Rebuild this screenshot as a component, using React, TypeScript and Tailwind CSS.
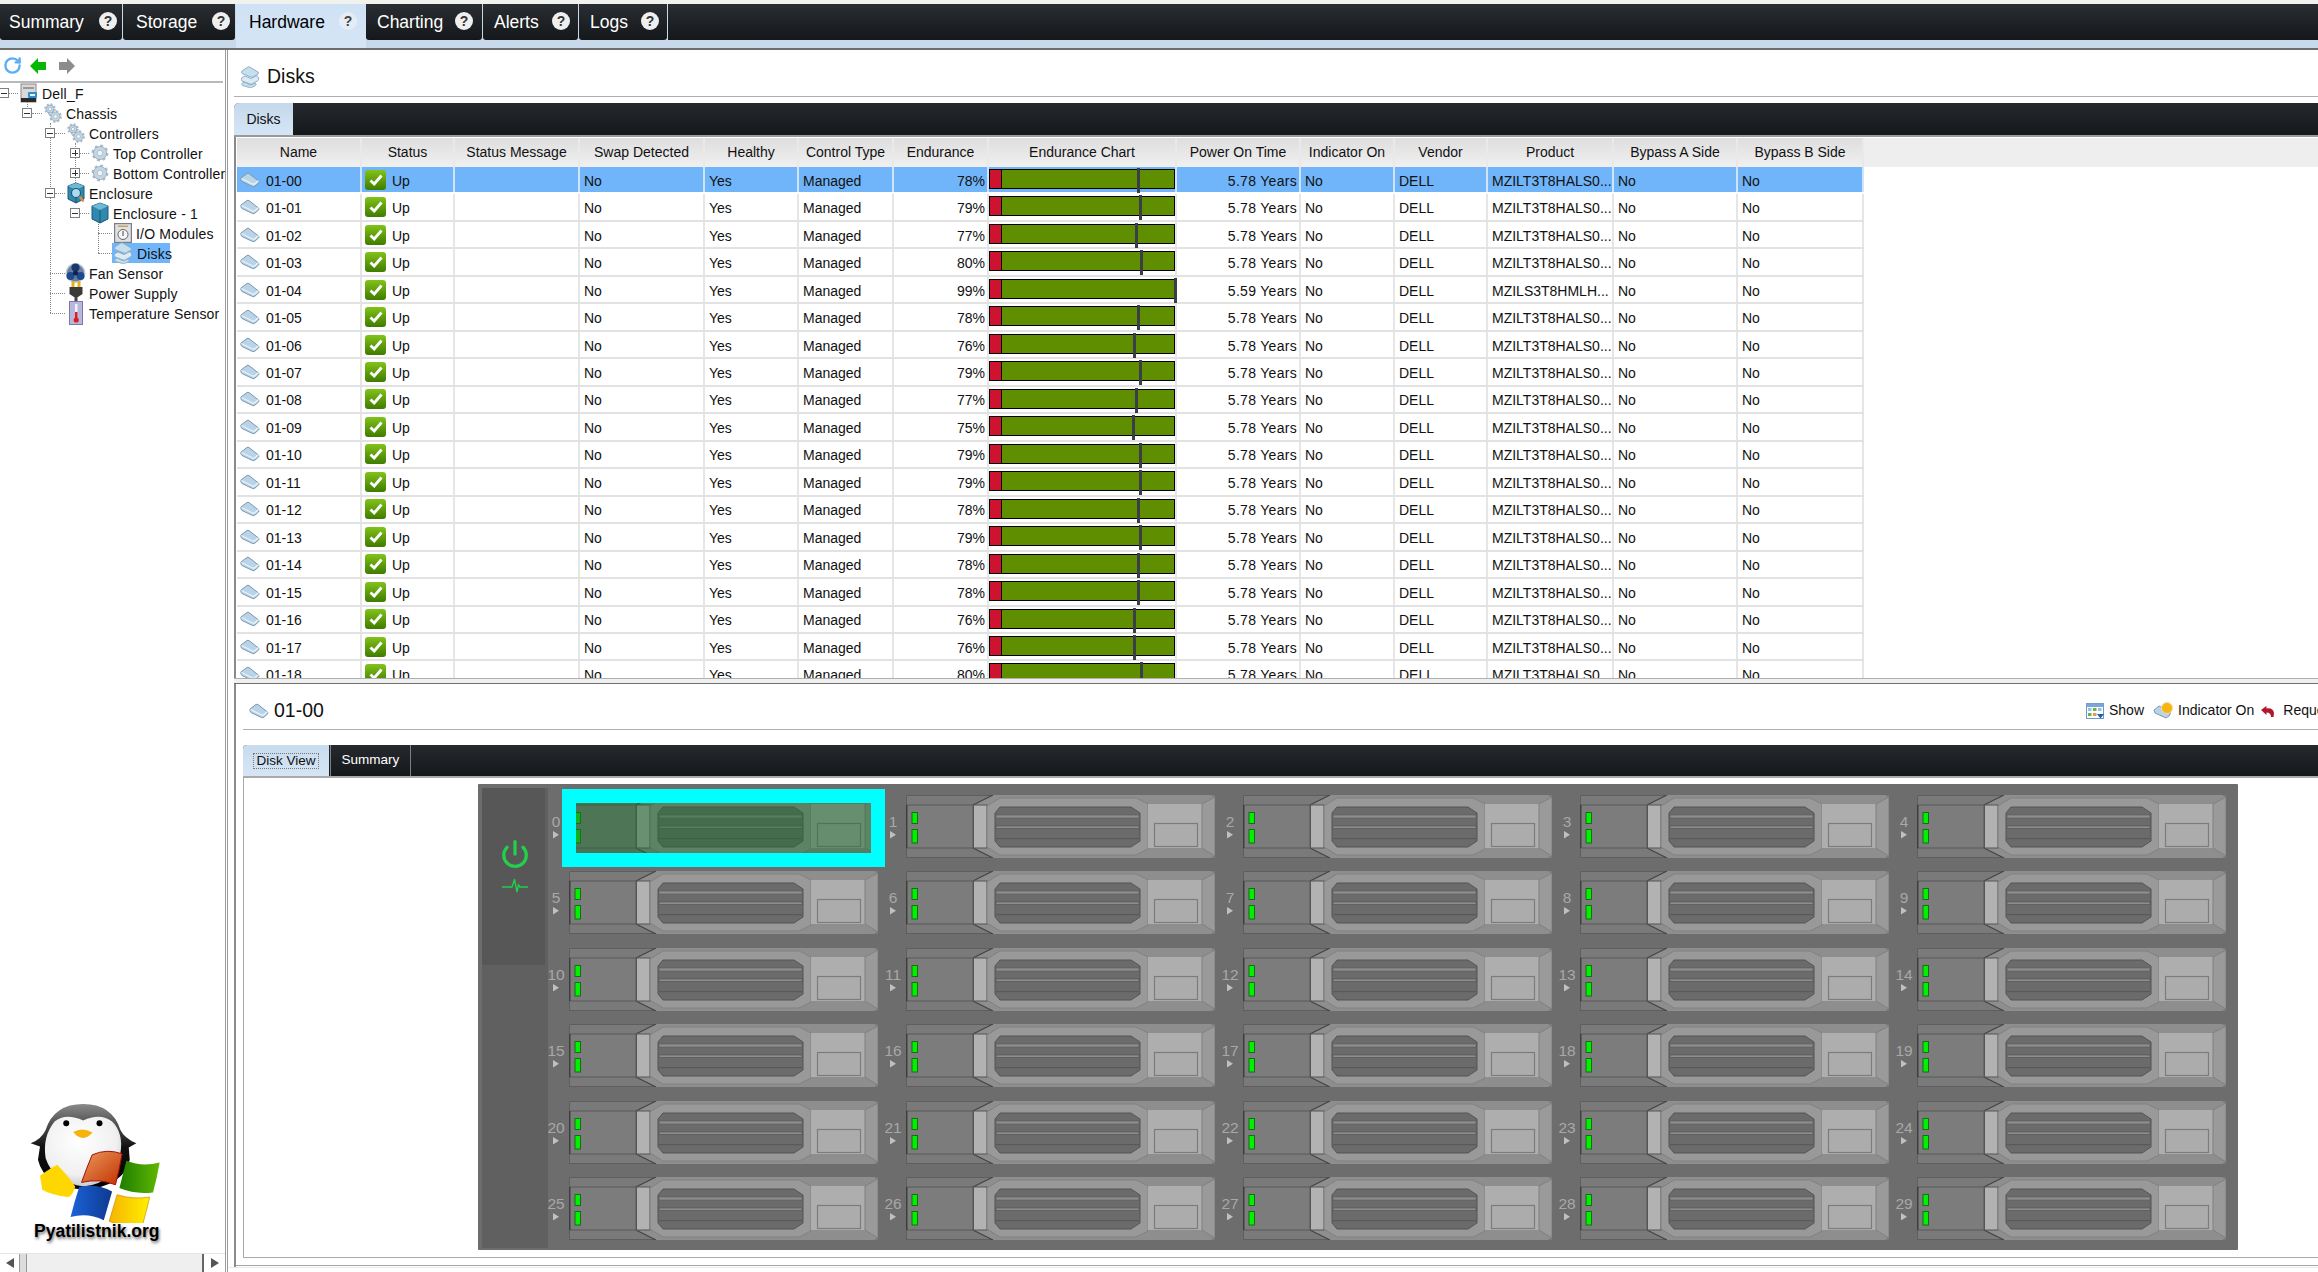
import React from "react";
import { RotateCw, Power } from "lucide-react";

const navTabs = [
  { label: "Summary", cls: "w-[122px] pl-[9px] pr-[5px]" },
  { label: "Storage", cls: "w-[112px] pl-[13px] pr-[5px]" },
  { label: "Hardware", cls: "w-[130px] pl-[13px] pr-[9px]", active: true },
  { label: "Charting", cls: "w-[116px] pl-[11px] pr-[9px]" },
  { label: "Alerts", cls: "w-[95px] pl-[11px] pr-[8px]" },
  { label: "Logs", cls: "w-[88px] pl-[11px] pr-[8px]" },
];

const percents = [78, 79, 77, 80, 99, 78, 76, 79, 77, 75, 79, 79, 78, 79, 78, 78, 76, 76, 80];
const headers = ["Name", "Status", "Status Message", "Swap Detected", "Healthy", "Control Type", "Endurance", "Endurance Chart", "Power On Time", "Indicator On", "Vendor", "Product", "Bypass A Side", "Bypass B Side"];
const cols = "grid grid-cols-[125px_93px_125px_125px_94px_95px_95px_188px_124px_94px_93px_126px_124px_126px]";

function DiskIcon({ size = 20, className = "" }: { size?: number; className?: string }) {
  return (
    <svg width={size} height={size * 0.8} viewBox="0 0 20 16" className={className}>
      <path d="M1 6 L7 1.5 Q8 1 9 1.6 L18.5 9 Q19.5 10 18.5 11 L15 14 Q14 15 12.5 14.5 L2 9.5 Q0.3 8 1 6Z" fill="#b9d4e8" stroke="#7f97aa" strokeWidth="1" />
      <path d="M1.5 6.5 L12.5 12 Q14 12.5 15 11.5 L18.5 8.8" fill="none" stroke="#e8f3fa" strokeWidth="1.3" />
    </svg>
  );
}

function DisksIcon() {
  return (
    <svg width="20" height="22" viewBox="0 0 20 22">
      <path d="M2 5 L8 1 Q9 0.6 10 1.2 L18 6 Q19 7 18 8 L13 11 Q12 11.6 11 11 L2 7.5 Q1 6 2 5Z" fill="#c6dfef" stroke="#8fb0c6" />
      <path d="M1.5 12 L5 10 L11 12.5 L17 9.5 L18.5 12 Q19 13.5 18 14.5 L12 18 Q11 18.6 10 18 L2 15 Q1 13.5 1.5 12Z" fill="#dceaf4" stroke="#8fb0c6" />
      <path d="M2 17.5 L4 16 L10.5 19 L15 17 L16 18 Q16.5 19 15.5 19.5 L11.5 21.5 Q10.5 22 9.5 21.5 L2.5 19.5 Q1.5 18.5 2 17.5Z" fill="#c6dfef" stroke="#8fb0c6" />
    </svg>
  );
}

function Gear({ cx, cy, r }: { cx: number; cy: number; r: number }) {
  const teeth = 2 * Math.PI * (r + 0.6);
  const dash = teeth / 16;
  return (
    <g>
      <circle cx={cx} cy={cy} r={r + 0.6} fill="none" stroke="#a9bccb" strokeWidth="2.4" strokeDasharray={`${dash} ${dash}`} />
      <circle cx={cx} cy={cy} r={r} fill="#c4d5e2" stroke="#93a8b8" strokeWidth="0.8" />
      <circle cx={cx} cy={cy} r={r * 0.42} fill="#f0f5f9" stroke="#9fb3c2" strokeWidth="0.7" />
    </g>
  );
}

function Gears() {
  return (
    <svg width="18" height="20" viewBox="0 0 18 20">
      <Gear cx={6} cy={6} r={4} />
      <Gear cx={11.5} cy={13.5} r={4.6} />
    </svg>
  );
}

function SingleGear() {
  return (
    <svg width="18" height="20" viewBox="0 0 18 20">
      <Gear cx={9} cy={10} r={6.6} />
    </svg>
  );
}

function ServerIcon() {
  return (
    <svg width="18" height="20" viewBox="0 0 18 20">
      <rect x="1" y="1" width="15" height="18" fill="#d9d9d9" stroke="#8a8a8a" />
      <rect x="3" y="4" width="11" height="2" fill="#9a9a9a" />
      <rect x="1" y="15" width="15" height="4" fill="#2a2a2a" />
      <rect x="8" y="9" width="9" height="6" rx="1" fill="#2d8ed0" />
      <rect x="10" y="11" width="5" height="2" fill="#e4f3ff" />
    </svg>
  );
}

function CubeIcon({ glass = false }: { glass?: boolean }) {
  return (
    <svg width="18" height="22" viewBox="0 0 18 22">
      <path d="M9 1 L17 4 V17 L9 21 L1 17 V4Z" fill="#2f88ad" stroke="#1d5b78" />
      <path d="M9 1 L17 4 L9 8 L1 4Z" fill="#6fb9d6" />
      <path d="M9 8 V21" stroke="#1b5570" />
      {glass && <circle cx="9" cy="11" r="4.5" fill="#a9dcf0" stroke="#23566e" strokeWidth="1.2" />}
      {glass && <path d="M12.5 14.5 L16.5 19.5" stroke="#e98a3a" strokeWidth="2.2" />}
    </svg>
  );
}

function IoIcon() {
  return (
    <svg width="18" height="20" viewBox="0 0 18 20">
      <rect x="0.5" y="0.5" width="17" height="19" fill="#dfe1e4" stroke="#7a7f86" strokeWidth="1.4" />
      <rect x="4" y="2.5" width="10" height="1.5" fill="#c5a35a" />
      <circle cx="9" cy="11.5" r="5" fill="#f6f6f6" stroke="#666" />
      <path d="M9 8 V13" stroke="#444" />
    </svg>
  );
}

function FanIcon() {
  return (
    <svg width="21" height="24" viewBox="0 0 21 24">
      <circle cx="10.5" cy="12" r="10" fill="#c3cad6" />
      <circle cx="10.5" cy="12" r="8.5" fill="#6b7ea0" />
      <circle cx="10.5" cy="6.5" r="4" fill="#17396f" />
      <circle cx="5.5" cy="15" r="4" fill="#1a4a8f" />
      <circle cx="15.5" cy="15" r="4" fill="#1a4a8f" />
      <circle cx="10.5" cy="12" r="2.5" fill="#0e2347" />
    </svg>
  );
}

function PlugIcon() {
  return (
    <svg width="14" height="24" viewBox="0 0 14 24">
      <rect x="2.5" y="0" width="3" height="6" fill="#e4b020" />
      <rect x="8.5" y="0" width="3" height="6" fill="#e4b020" />
      <path d="M0.5 6 H13.5 V13 L9 16 H5 L0.5 13Z" fill="#3a3a3a" />
      <rect x="5.5" y="16" width="3" height="8" fill="#444" />
    </svg>
  );
}

function ThermoIcon() {
  return (
    <svg width="14" height="24" viewBox="0 0 14 24">
      <rect x="0.5" y="0.5" width="13" height="23" fill="#b9b7de" stroke="#7a78a8" />
      <rect x="6" y="3" width="2.5" height="14" fill="#f2f2f6" />
      <rect x="6" y="11" width="2.5" height="7" fill="#d42020" />
      <circle cx="7.2" cy="19" r="2.6" fill="#d42020" />
    </svg>
  );
}

function Tri({ dir, size = 8, fill = "#555" }: { dir: "l" | "r"; size?: number; fill?: string }) {
  return (
    <svg width={size} height={size * 1.25} viewBox="0 0 8 10">
      <path d={dir === "r" ? "M0 0 L8 5 L0 10Z" : "M8 0 L0 5 L8 10Z"} fill={fill} />
    </svg>
  );
}

const box = (s: string) => (
  <span className="relative flex h-[10px] w-[10px] shrink-0 items-center justify-center border border-[#808080] bg-white">
    <span className="h-px w-[6px] bg-[#333]" />
    {s === "+" && <span className="absolute h-[6px] w-px bg-[#333]" />}
  </span>
);

const stub = "h-px shrink-0 border-t border-dotted border-[#888]";

const tree = [
  { label: "Dell_F", pl: "-ml-px", exp: "-", stubW: "w-[9px]", icon: <ServerIcon /> },
  { label: "Chassis", pl: "pl-[22px]", exp: "-", stubW: "w-[10px]", icon: <Gears /> },
  { label: "Controllers", pl: "pl-[45px]", exp: "-", stubW: "w-[10px]", icon: <Gears /> },
  { label: "Top Controller", pl: "pl-[70px]", exp: "+", stubW: "w-[9px]", icon: <SingleGear /> },
  { label: "Bottom Controller", pl: "pl-[70px]", exp: "+", stubW: "w-[9px]", icon: <SingleGear /> },
  { label: "Enclosure", pl: "pl-[45px]", exp: "-", stubW: "w-[10px]", icon: <CubeIcon glass /> },
  { label: "Enclosure - 1", pl: "pl-[70px]", exp: "-", stubW: "w-[9px]", icon: <CubeIcon /> },
  { label: "I/O Modules", pl: "pl-[98px]", stubW: "w-[14px]", icon: <IoIcon /> },
  { label: "Disks", pl: "pl-[98px]", stubW: "w-[14px]", icon: <DisksIcon />, selected: true },
  { label: "Fan Sensor", pl: "pl-[50px]", stubW: "w-[15px]", icon: <FanIcon /> },
  { label: "Power Supply", pl: "pl-[50px]", stubW: "w-[15px]", icon: <PlugIcon /> },
  { label: "Temperature Sensor", pl: "pl-[50px]", stubW: "w-[15px]", icon: <ThermoIcon /> },
];

function Logo() {
  return (
    <svg width="137" height="123" viewBox="80 60 410 370" className="ml-[27px]">
      <defs>
        <radialGradient id="belly" cx="0.45" cy="0.35" r="0.75">
          <stop offset="0" stopColor="#ffffff" />
          <stop offset="0.65" stopColor="#f0f0f0" />
          <stop offset="1" stopColor="#b5b5b5" />
        </radialGradient>
        <linearGradient id="cap" x1="0" y1="0" x2="0" y2="1">
          <stop offset="0" stopColor="#8a8a8a" />
          <stop offset="0.5" stopColor="#111" />
          <stop offset="1" stopColor="#000" />
        </linearGradient>
        <linearGradient id="win-r" x1="0" y1="0" x2="1" y2="1">
          <stop offset="0" stopColor="#eb9a5c" />
          <stop offset="1" stopColor="#c23000" />
        </linearGradient>
        <linearGradient id="win-g" x1="0" y1="0" x2="1" y2="0">
          <stop offset="0" stopColor="#1f7d00" />
          <stop offset="1" stopColor="#60b800" />
        </linearGradient>
        <linearGradient id="win-b" x1="0" y1="0" x2="1" y2="0">
          <stop offset="0" stopColor="#1c62d8" />
          <stop offset="1" stopColor="#0c3a90" />
        </linearGradient>
        <linearGradient id="win-y" x1="0" y1="0" x2="1" y2="0">
          <stop offset="0" stopColor="#f6b400" />
          <stop offset="1" stopColor="#fff000" />
        </linearGradient>
      </defs>
      <path d="M135 150 Q160 72 248 72 Q335 72 360 150 Q372 175 408 190 L385 203 L388 240 Q370 320 250 330 Q130 320 112 240 L118 200 L90 190 Q122 178 135 150Z" fill="url(#cap)" />
      <path d="M248 122 Q195 98 162 125 Q125 170 135 235 Q160 310 250 320 Q345 310 360 220 Q370 160 335 125 Q300 98 248 122Z" fill="url(#belly)" />
      <circle cx="197" cy="130" r="9" fill="#000" />
      <circle cx="297" cy="130" r="9" fill="#000" />
      <path d="M218 156 Q246 140 276 158 Q262 174 248 174 Q232 174 218 156Z" fill="#f6b40a" />
      <path d="M118 288 Q150 265 170 255 Q200 285 224 320 Q215 352 200 352 Q150 345 125 330Z" fill="#ffd700" />
      <path d="M275 225 Q320 205 365 222 Q358 265 345 315 Q295 295 243 308 Q258 265 275 225Z" fill="url(#win-r)" stroke="#a01010" strokeWidth="3" />
      <path d="M378 243 Q425 262 478 248 Q470 295 458 338 Q405 345 357 325 Q367 285 378 243Z" fill="url(#win-g)" />
      <path d="M236 322 Q290 310 335 335 Q322 380 310 422 Q262 398 210 412 Q222 365 236 322Z" fill="url(#win-b)" />
      <path d="M350 345 Q400 360 448 352 Q438 395 426 438 Q378 445 326 425 Q338 385 350 345Z" fill="url(#win-y)" stroke="#c88a00" strokeWidth="2" />
    </svg>
  );
}

function Disk() {
  return (
    <svg width="309" height="63" viewBox="0 0 309 63" className="block">
      <rect x="0" y="0" width="309" height="63" fill="#7a7a7a" />
      <path d="M0.5 63 V0.5 H87" fill="none" stroke="#5e5e5e" />
      <path d="M0.5 62.5 H87" stroke="#5e5e5e" />
      <rect x="0" y="10" width="67" height="43" fill="#7c7c7c" stroke="#585858" />
      <rect x="0" y="10" width="1.5" height="43" fill="#3e3e3e" />
      <path d="M67 10 L87 0 H305 L309 3 V60 L305 63 H87 L67 53Z" fill="#8e8e8e" />
      <path d="M67 10 L87 0" stroke="#444" strokeWidth="1.2" />
      <path d="M67 53 L87 63" stroke="#444" strokeWidth="1.2" />
      <rect x="67.5" y="10" width="13.5" height="43" fill="#b2b2b2" stroke="#555" />
      <path d="M81 11 L94 3 H230 L242 9 V54 L230 60 H94 L81 52Z" fill="#999" stroke="#818181" />
      <path d="M94 12 H225 L234 18 V46 L225 52 H94 L89 46 V18Z" fill="#6b6b6b" stroke="#555" />
      <rect x="90" y="20" width="143" height="3" fill="#8d8d8d" stroke="#5a5a5a" strokeWidth="0.6" />
      <rect x="90" y="31" width="143" height="2.5" fill="#8d8d8d" stroke="#505050" strokeWidth="0.6" />
      <rect x="90" y="43" width="143" height="1.2" fill="#595959" />
      <rect x="242" y="9" width="54" height="44" fill="#aeaeae" />
      <rect x="248.5" y="28.5" width="43" height="23" fill="#acacac" stroke="#7c7c7c" strokeWidth="1.2" />
      <path d="M296 9 L309 2 V61 L296 53Z" fill="#9a9a9a" stroke="#808080" />
      <rect x="6" y="17.5" width="5.5" height="11" fill="#00f000" stroke="#176c17" />
      <rect x="6" y="34.5" width="5.5" height="13.5" fill="#00f000" stroke="#176c17" />
    </svg>
  );
}

function Slot({ n }: { n: number }) {
  return (
    <div className="relative h-[63px] w-[309px]">
      <Disk />
      <div className="absolute right-full top-[19px] flex w-[26px] flex-col items-center text-[15.5px] leading-[16px] text-[#a8a8a8]">
        <span>{n}</span>
        <span className="mt-[1px]">
          <Tri dir="r" size={6} fill="#c0c0c0" />
        </span>
      </div>
      {n === 0 && (
        <div className="absolute left-[-7px] top-[-6px] h-[78px] w-[323px] border-x-[14px] border-y-[14px] border-[#00ffff] bg-[#207030]/50" />
      )}
    </div>
  );
}

export default function App() {
  return (
    <div className="flex h-[1272px] w-[2318px] flex-col overflow-hidden bg-white font-[Liberation_Sans,Arial,sans-serif] text-[14px] text-[#111]">
      <div className="h-[4px] shrink-0 bg-[#f1f1ee]" />
      <nav className="flex h-[44px] shrink-0 items-start bg-[#c8d9ea]">
        {navTabs.map((t) => (
          <div
            key={t.label}
            className={
              t.active
                ? `flex h-[44px] items-start justify-between bg-gradient-to-b from-[#cfe2f5] to-[#d5e5f5] pt-[7px] text-[17.5px] text-black ${t.cls}`
                : `mr-px flex h-[36px] items-start justify-between rounded-b-[3px] bg-gradient-to-b from-[#2a2d31] to-[#15181b] pt-[7px] text-[17.5px] text-white ${t.cls}`
            }
          >
            <span className="leading-[22px]">{t.label}</span>
            <span
              className={
                t.active
                  ? "mt-[1px] flex h-[18px] w-[18px] items-center justify-center rounded-full bg-[#e4edf5] text-[14px] font-bold text-[#444]"
                  : "mt-[1px] flex h-[18px] w-[18px] items-center justify-center rounded-full bg-[#efefef] text-[14px] font-bold text-[#333]"
              }
            >
              ?
            </span>
          </div>
        ))}
        <div className="h-[36px] flex-1 bg-gradient-to-b from-[#2a2d31] to-[#15181b]" />
      </nav>
      <div className="h-[2px] shrink-0 bg-[#6d6d6d]" />

      <div className="flex min-h-0 flex-1">
        {/* Sidebar */}
        <aside className="flex w-[225px] shrink-0 flex-col">
          <div className="mr-[2px] flex h-[33px] shrink-0 items-center border-b-2 border-[#b9b9b9] pl-[3px]">
            <RotateCw size={19} strokeWidth={3} className="text-[#5aaef5]" />
            <svg width="17" height="16" viewBox="0 0 17 16" className="ml-[8px]">
              <path d="M0 8 L8 0 V4 H16 V12 H8 V16Z" fill="#06b806" />
            </svg>
            <svg width="16" height="16" viewBox="0 0 16 16" className="ml-[12px]">
              <path d="M16 8 L8 0 V4 H0 V12 H8 V16Z" fill="#8c8c8c" />
            </svg>
          </div>
          <div className="relative flex-1 overflow-hidden">
            <div className="absolute left-[27px] top-[14px] h-[20px] border-l border-dotted border-[#888]" />
            <div className="absolute left-[50px] top-[40px] h-[190px] border-l border-dotted border-[#888]" />
            <div className="absolute left-[75px] top-[60px] h-[40px] border-l border-dotted border-[#888]" />
            <div className="absolute left-[98px] top-[130px] h-[40px] border-l border-dotted border-[#888]" />
            <div className="relative">
              {tree.map((r) => (
                <div key={r.label} className={`flex h-[20px] items-center ${r.pl}`}>
                  {r.exp && box(r.exp)}
                  <span className={`${stub} ${r.stubW}`} />
                  <span className={r.selected ? "flex h-[20px] w-[58px] items-center bg-[#70b5f9]" : "flex h-[20px] items-center"}>
                    <span className="flex h-[20px] w-[21px] shrink-0 items-center justify-center">{r.icon}</span>
                    <span className={r.selected ? "ml-[4px] mt-[2px] whitespace-nowrap tracking-[0.2px]" : "ml-[3px] mt-[2px] whitespace-nowrap tracking-[0.2px]"}>{r.label}</span>
                  </span>
                </div>
              ))}
            </div>
          </div>
          <div className="relative shrink-0">
            <Logo />
            <div className="mt-[-2px] pl-[34px] text-[17.5px] font-bold leading-[20px] text-black [text-shadow:1px_2px_3px_rgba(0,0,0,0.55)]">
              Pyatilistnik.org
            </div>
          </div>
          <div className="mt-[12px] flex h-[19px] shrink-0 items-center border-t border-[#e4e4e4] text-[#444]">
            <span className="flex w-[19px] justify-center">
              <Tri dir="l" />
            </span>
            <span className="h-full w-[8px] border-x border-[#999] bg-[#dcdcdc]" />
            <span className="h-full flex-1 bg-[#efefef]" />
            <span className="h-full w-[2px] bg-[#666]" />
            <span className="flex w-[21px] justify-center">
              <Tri dir="r" />
            </span>
          </div>
        </aside>
        <div className="w-[3px] shrink-0 border-x border-[#9a9a9a] bg-white" />

        {/* Main */}
        <main className="flex min-w-0 flex-1 flex-col">
          {/* Upper pane */}
          <section className="flex h-[628px] shrink-0 flex-col pl-[6px]">
            <div className="flex h-[47px] shrink-0 items-center border-b border-[#b0b0b0] pl-[6px] pt-[8px]">
              <DisksIcon />
              <span className="ml-[7px] text-[19.5px]">Disks</span>
            </div>
            <div className="mt-[6px] flex h-[32px] shrink-0 rounded-tl-[5px] bg-gradient-to-b from-[#26292d] to-[#15181b]">
              <div className="flex w-[59px] items-center justify-center rounded-tl-[5px] bg-gradient-to-b from-[#c5d9ec] to-[#d5e5f5] text-[14px]">Disks</div>
            </div>
            <div className="h-[2px] shrink-0 bg-[#9a9a9a]" />
            <div className="min-h-0 flex-1 overflow-hidden border-l-2 border-[#8a8a8a] pl-px">
              <div className="mt-px bg-[#eeeeee]">
                <div className={`${cols} w-[1627px]`}>
                  {headers.map((h) => (
                    <div key={h} className="flex h-[29px] items-center justify-center border-r-2 border-[#e9e9e9] bg-gradient-to-b from-[#dedede] to-[#f0f0f0] text-[#111]">
                      {h}
                    </div>
                  ))}
                </div>
              </div>
              <div className="w-[1627px]">
                {percents.map((p, i) => {
                  const sel = i === 0;
                  const cell = `flex h-full items-center overflow-hidden whitespace-nowrap border-r-2 pl-[4px] pt-[3px] ${sel ? "border-[#cfe3fa] bg-[#70b5f9]" : "border-[#e6e6e6]"}`;
                  return (
                    <div key={i} className={`${cols} h-[27.47px] border-b-2 ${sel ? "border-white" : "border-[#e2e2e2]"}`}>
                      <div className={`${cell} gap-[7px] !pl-[3px]`}>
                        <DiskIcon className="mt-[-3px]" />
                        <span className="-ml-[1px]">{`01-${String(i).padStart(2, "0")}`}</span>
                      </div>
                      <div className={`${cell} gap-[6px] !pl-[3px]`}>
                        <span className="mt-[-3px] flex h-[20px] w-[21px] shrink-0 items-center justify-center rounded-[3px] bg-gradient-to-b from-[#82c31a] to-[#3f7c00]">
                          <svg width="14" height="12" viewBox="0 0 14 12">
                            <path d="M1.5 6.5 L5.2 10 L12.5 1.5" fill="none" stroke="#fff" strokeWidth="2.8" />
                          </svg>
                        </span>
                        <span>Up</span>
                      </div>
                      <div className={cell} />
                      <div className={cell}>No</div>
                      <div className={cell}>Yes</div>
                      <div className={cell}>Managed</div>
                      <div className={`${cell} justify-end !pr-[2px]`}>{p}%</div>
                      <div className={`${cell} relative !items-start !overflow-visible !pl-0 !pt-0`}>
                        <div className="mt-[2px] flex h-[20px] w-[186px] border border-black bg-[#5f8f00]">
                          <div className="h-full w-[12px] border-r border-black bg-[#cd1330]" />
                        </div>
                        <div className="absolute top-[1px] h-[25px] w-[3px] bg-[#3a3f47]" style={{ left: Math.round(146 + (p - 77) * 1.75) }} />
                      </div>
                      <div className={`${cell} justify-end !pr-[2px] tracking-[0.3px]`}>{i === 4 ? "5.59 Years" : "5.78 Years"}</div>
                      <div className={cell}>No</div>
                      <div className={cell}>DELL</div>
                      <div className={cell}>{i === 4 ? "MZILS3T8HMLH..." : "MZILT3T8HALS0..."}</div>
                      <div className={cell}>No</div>
                      <div className={cell}>No</div>
                    </div>
                  );
                })}
              </div>
            </div>
          </section>

          {/* Splitter */}
          <div className="ml-[6px] h-[6px] shrink-0 border-y border-b-[#6f6f6f] border-t-[#b0b0b0] bg-[#f0f0f0]" />

          {/* Lower pane */}
          <section className="ml-[6px] flex min-h-0 flex-1 flex-col border-l-2 border-[#8a8a8a]">
            <div className="ml-[7px] flex h-[46px] shrink-0 items-center border-b border-[#b0b0b0] pl-[6px] pt-[8px]">
              <DiskIcon />
              <span className="ml-[5px] flex-1 text-[19.5px]">01-00</span>
              <div className="flex h-[20px] w-[232px] shrink-0 items-center overflow-hidden whitespace-nowrap">
                <svg width="18" height="16" viewBox="0 0 18 16" className="shrink-0">
                  <rect x="0.5" y="0.5" width="17" height="15" fill="#fff" stroke="#6f98c8" />
                  <rect x="0.5" y="0.5" width="17" height="3.5" fill="#7aa6d8" />
                  <rect x="2" y="5" width="3.5" height="3" fill="#8cc4f0" />
                  <rect x="7" y="5" width="3.5" height="3" fill="#6fb04a" />
                  <rect x="12" y="5" width="3.5" height="3" fill="#8cc4f0" />
                  <rect x="2" y="10" width="3.5" height="3" fill="#6fb04a" />
                  <rect x="7" y="10" width="3.5" height="3" fill="#e89a50" />
                  <path d="M11 11 H18 L14.5 15.5Z" fill="#1a5fb4" />
                </svg>
                <span className="ml-[5px] text-[14px]">Show</span>
                <span className="mx-[4px] h-[19px] w-px bg-[#aaa]" />
                <svg width="20" height="18" viewBox="0 0 20 18" className="ml-[1px] shrink-0">
                  <path d="M1 8 L6 4 L17 10 Q18 12 16 14 L13 16 L2 11Z" fill="#b9d4e8" stroke="#7f97aa" />
                  <circle cx="14" cy="6" r="5.5" fill="#f5b60f" stroke="#f2d9a8" />
                </svg>
                <span className="ml-[5px] text-[14px]">Indicator On</span>
                <svg width="15" height="14" viewBox="0 0 14 14" className="ml-[6px] shrink-0">
                  <path d="M0.5 6 L6 2 V4.5 Q12.5 3.5 13.5 9 L13 13 L10.5 13 Q10.5 8.5 6 8.5 V11Z" fill="#b4142c" />
                </svg>
                <span className="ml-[8px] text-[14px]">Request</span>
              </div>
            </div>
            <div className="ml-[7px] mt-[15px] flex h-[31px] shrink-0 rounded-tl-[4px] bg-gradient-to-b from-[#26292d] to-[#15181b]">
              <div className="flex w-[86px] items-center justify-center rounded-tl-[4px] bg-gradient-to-b from-[#c8dcef] to-[#d5e5f5]">
                <span className="border border-dotted border-[#777] px-[2px] text-[13.5px] leading-[14px]">Disk View</span>
              </div>
              <div className="ml-px flex w-[81px] items-center justify-center border-x border-[#7b8088] text-[13.5px] text-white">Summary</div>
            </div>
            <div className="ml-[7px] h-[2px] shrink-0 bg-[#aaa]" />
            <div className="ml-[7px] h-[480px] shrink-0 border-b border-l border-[#aaa] pl-[234px] pt-[6px]">
              <div className="flex h-[466px] w-[1760px] items-start rounded-[1px] bg-[#6d6d6d]">
                <div className="ml-[4px] mt-[4px] h-[460px] w-[66px] shrink-0 bg-[#606060]">
                  <div className="flex h-[177px] w-[63px] flex-col items-center bg-[#575757] pl-[3px] pt-[51px]">
                    <Power size={30} strokeWidth={2.6} className="text-[#22d04a]" />
                    <svg width="26" height="14" viewBox="0 0 26 14" className="mt-[10px]">
                      <path d="M0 8 H10 L12.5 0.5 L15 13 L16.5 6 L18 8 H26" fill="none" stroke="#22d04a" strokeWidth="1.4" />
                    </svg>
                  </div>
                </div>
                <div className="ml-[21px] mt-[11px] grid grid-cols-[309px_309px_309px_309px_309px] gap-x-[28px] gap-y-[13.4px]">
                  {Array.from({ length: 30 }, (_, n) => (
                    <Slot key={n} n={n} />
                  ))}
                </div>
              </div>
            </div>
            <div className="mt-[7px] h-px shrink-0 bg-[#a5a5a5]" />
          </section>
          <div className="h-[5px] shrink-0 border-t border-[#eaeaea]" />
        </main>
      </div>
    </div>
  );
}
